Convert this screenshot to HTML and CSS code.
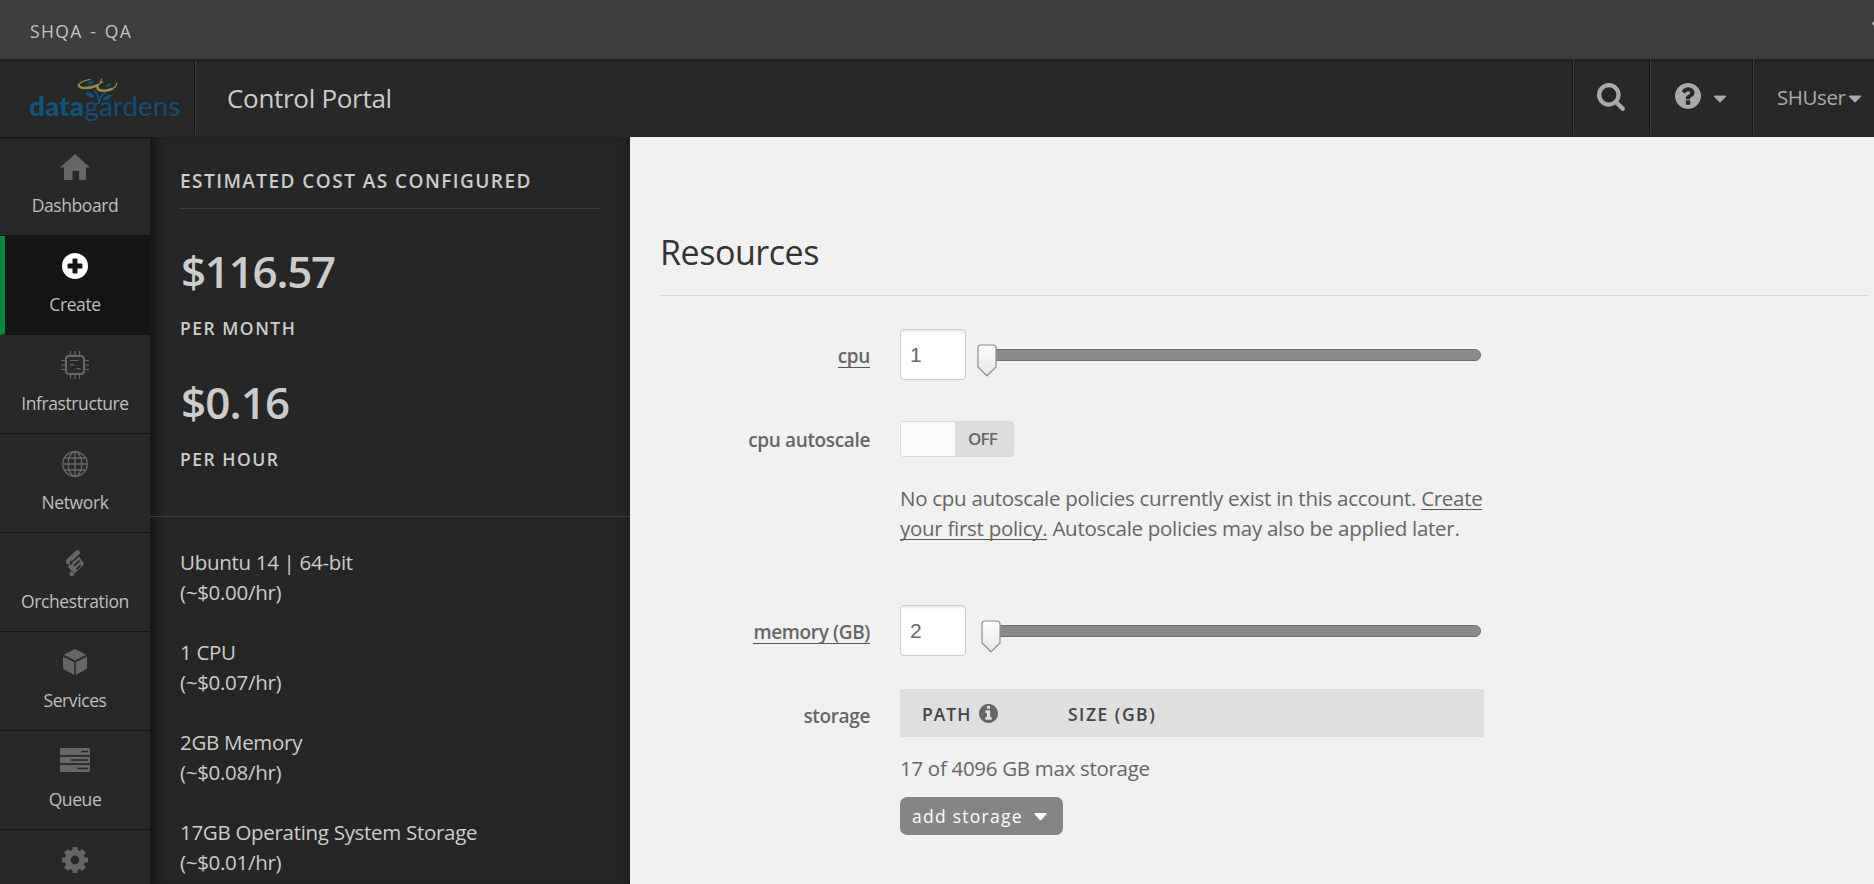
FILE: index.html
```html
<!DOCTYPE html>
<html lang="en">
<head>
<meta charset="utf-8">
<title>Control Portal</title>
<link rel="stylesheet" href="styles.css">
</head>
<body>
<div class="topbar">
  <span class="account">SHQA - QA</span>
  <svg class="edge" width="2" height="5" viewBox="0 0 2 5"><path d="M2 0 0 2.5 2 5z" fill="#bbb"/></svg>
</div>
<header class="header">
  <div class="brand">
    <svg width="151" height="46" viewBox="0 0 151 46">
      <g fill="none" stroke-linecap="round" stroke="#8f8b45">
        <path stroke-width="1.200" d="M60 2.300C54 3.500 49.500 5.500 48.800 8M71.500 2C71.500 4.500 70 6.500 67.500 8.300M73 5C69 6.500 67.500 9 67.500 10.500M86.500 6C87 8.500 85 10.500 82 12"/>
        <path stroke-width="2.600" d="M48.800 8C49 12 59 12 67.500 8.300M67.500 10.500C68 14.500 76 14.500 82 12"/>
      </g>
      <g fill="#0f5582">
        <path d="M57 7q3-4 7-2.500q-2 4-7 2.500zM75 9.500q3-4 7-2.500q-2 4-7 2.500zM55 15.500q8-1 9.500 5q-7 .5-9.500-5zM82 18q-7-.5-9.500 5q7 .5 9.500-5z"/>
      </g>
      <path d="M63.500 13q5 3 5.500 13.500M76 15q-6 3-7 12" fill="none" stroke="#0f5582" stroke-width="1.600"/>
      <text class="logo-bold" x="-1" y="38.500" textLength="55" lengthAdjust="spacingAndGlyphs">data</text>
      <text class="logo-thin" x="54.500" y="38.500" textLength="96" lengthAdjust="spacingAndGlyphs">gardens</text>
    </svg>
  </div>
  <div class="title">Control Portal</div>
  <div class="tool search">
    <svg width="28" height="28" viewBox="64 128 1664 1664"><path fill="#aaa" d="M1216 832q0-185-131.500-316.500t-316.500-131.500-316.500 131.500-131.500 316.500 131.500 316.500 316.500 131.500 316.500-131.500 131.500-316.500zm512 832q0 52-38 90t-90 38q-54 0-90-38l-343-342q-179 124-399 124-143 0-273.500-55.500t-225-150-150-225-55.500-273.500 55.500-273.500 150-225 225-150 273.500-55.500 273.500 55.500 225 150 150 225 55.500 273.500q0 220-124 399l343 343q37 37 37 90z"/></svg>
  </div>
  <div class="tool help">
    <svg width="26" height="26" viewBox="128 128 1536 1536"><path fill="#aaa" d="M1024 1376v-192q0-14-9-23t-23-9h-192q-14 0-23 9t-9 23v192q0 14 9 23t23 9h192q14 0 23-9t9-23zm256-672q0-88-55.500-163t-138.500-116-170-41q-243 0-371 213-15 24 8 42l132 100q7 6 19 6 16 0 25-12 53-68 86-92 34-24 86-24 48 0 85.500 26t37.500 59q0 38-20 61t-68 45q-63 28-115.500 86.500t-52.500 125.500v36q0 14 9 23t23 9h192q14 0 23-9t9-23q0-19 21.500-49.500t54.500-49.500q32-18 49-28.500t46-35 44.500-48 28-60.500 12.500-81zm384 192q0 209-103 385.500t-279.500 279.500-385.500 103-385.500-103-279.500-279.500-103-385.500 103-385.500 279.500-279.500 385.500-103 385.500 103 279.500 279.500 103 385.500z"/></svg>
    <svg class="caret" width="14" height="8" viewBox="0 0 14 8"><path fill="#aaa" d="M1.500.5h11q1.200.3.400 1.300L7.800 7q-.8.700-1.600 0L1.100 1.800Q.3.800 1.500.5z"/></svg>
  </div>
  <div class="tool user">
    <span class="username">SHUser</span>
    <svg class="caret" width="14" height="8" viewBox="0 0 14 8"><path fill="#aaa" d="M1.500.5h11q1.200.3.400 1.300L7.800 7q-.8.700-1.600 0L1.100 1.800Q.3.800 1.500.5z"/></svg>
  </div>
</header>
<div class="body">
  <nav class="sidebar">
    <a class="item">
      <svg class="icon" width="30" height="28" viewBox="0 0 30 28"><path d="M15 1 30 14.500h-4V27h-7v-9h-6.500v9H4V14.500H0z"/></svg>
      <span class="label">Dashboard</span>
    </a>
    <a class="item active">
      <svg class="icon" width="26" height="28" viewBox="0 0 26 28"><path fill-rule="evenodd" d="M13 1a13 13 0 1 1 0 26a13 13 0 0 1 0-26zM11.500 6.500q-1 0-1 1v4h-4q-1 0-1 1v3q0 1 1 1h4v4q0 1 1 1h3q1 0 1-1v-4h4q1 0 1-1v-3q0-1-1-1h-4v-4q0-1-1-1z"/></svg>
      <span class="label">Create</span>
    </a>
    <a class="item">
      <svg class="icon line" width="28" height="28" viewBox="0 0 28 28"><rect x="5" y="5" width="18" height="18" rx="3" stroke-width="2"/><path stroke-width="1.200" d="M9.500 0v4M14 0v4M18.500 0v4M9.500 24v4M14 24v4M18.500 24v4M0 9.500h4M0 14h4M0 18.500h4M24 9.500h4M24 14h4M24 18.500h4M9 9.500h8.500M9 13.800h4.500M15.500 17.800h4"/></svg>
      <span class="label">Infrastructure</span>
    </a>
    <a class="item">
      <svg class="icon line" width="28" height="28" viewBox="0 0 28 28"><g stroke-width="1.400"><circle cx="14" cy="14" r="12.300"/><ellipse cx="14" cy="14" rx="6.800" ry="12.300"/><path d="M14 1.700v24.600M1.700 14h24.600M3.800 8h20.400M3.800 20h20.400"/></g></svg>
      <span class="label">Network</span>
    </a>
    <a class="item">
      <svg class="icon" width="18" height="28" viewBox="0 0 18 28">
        <path d="M9.500 2Q12-.2 13.500 2T13 5.500L6 12 4 11.500Q3 13.500 4.500 15.500H2Q-.5 14-.2 11.200z"/>
        <path fill-rule="evenodd" d="M13.200 7.800 18 14.500 16.500 17 8.500 24.500Q8 21.800 5 21.500L1.500 17.300 6.500 15 5.800 14zM7.500 16.200l1.200 1.500 5.500-5.400-1.200-1.500zM10 19.600l1.200 1.400 4-4-1.200-1.400z"/>
        <circle cx="5.700" cy="25" r="2.400"/>
      </svg>
      <span class="label">Orchestration</span>
    </a>
    <a class="item">
      <svg class="icon" width="24" height="28" viewBox="0 0 24 28"><path d="M12 1 23.300 6.800 12 12.500.700 6.800zM0 8.500 11.200 14.200V27L1 21.300Q0 20.700 0 19.500zM24 8.500 12.800 14.200V27L23 21.300q1-.6 1-1.800z"/></svg>
      <span class="label">Services</span>
    </a>
    <a class="item">
      <svg class="icon" width="30" height="28" viewBox="0 0 30 28"><rect y="1" width="30" height="7" rx="1"/><rect y="9.700" width="30" height="6.600" rx="1"/><rect y="18" width="30" height="7" rx="1"/><path fill="none" stroke="#282828" stroke-width="1.700" d="M21.500 4.500H28M11 13h17M17.500 21.500H28"/></svg>
      <span class="label">Queue</span>
    </a>
    <a class="item">
      <svg class="icon" width="26" height="28" viewBox="-13 -14 26 28"><path fill-rule="evenodd" d="M-2.800-9.700-2.200-13h4.400l.6 3.300 1.900.8L7.400-10.800l3.300 3.300L8.900-4.700l.8 1.900L13-2.200v4.400l-3.300.6-.8 1.900 1.800 2.800-3.300 3.300-2.700-1.900-1.900.8L2.200 13h-4.400l-.6-3.300-1.900-.8-2.700 1.900-3.300-3.300 1.800-2.800-.8-1.900L-13 2.200v-4.400l3.300-.6.800-1.900-1.800-2.800 3.300-3.300 2.700 1.900zM0-4.400a4.400 4.400 0 1 0 0 8.800a4.400 4.400 0 0 0 0-8.800z"/></svg>
    </a>
  </nav>
  <aside class="cost">
    <section class="summary">
      <h2 class="cost-title">ESTIMATED COST AS CONFIGURED</h2>
      <div class="price">$116.57</div>
      <div class="per">PER MONTH</div>
      <div class="price second">$0.16</div>
      <div class="per">PER HOUR</div>
    </section>
    <section class="details">
      <p>Ubuntu 14 | 64-bit<br>(~$0.00/hr)</p>
      <p>1 CPU<br>(~$0.07/hr)</p>
      <p>2GB Memory<br>(~$0.08/hr)</p>
      <p>17GB Operating System Storage<br>(~$0.01/hr)</p>
    </section>
  </aside>
  <main class="main">
    <h1 class="heading">Resources</h1>
    <div class="row cpu">
      <div class="name"><u>cpu</u></div>
      <div class="field">
        <div class="input">1</div>
        <div class="slider"><svg class="handle" width="20" height="33" viewBox="0 0 20 33"><use href="#handle"/></svg></div>
      </div>
    </div>
    <div class="row autoscale">
      <div class="name">cpu autoscale</div>
      <div class="stack">
        <div class="toggle"><span class="knob"></span><span class="off">OFF</span></div>
        <p class="note">No cpu autoscale policies currently exist in this account. <u>Create</u><br><u>your first policy.</u> Autoscale policies may also be applied later.</p>
      </div>
    </div>
    <div class="row memory">
      <div class="name"><u>memory (GB)</u></div>
      <div class="field">
        <div class="input">2</div>
        <div class="slider mem"><svg class="handle" width="20" height="33" viewBox="0 0 20 33"><use href="#handle"/></svg></div>
      </div>
    </div>
    <div class="row storage">
      <div class="name">storage</div>
      <div class="stack">
        <div class="table-head">
          <span class="path">PATH</span>
          <svg class="info" width="19" height="19" viewBox="128 128 1536 1536"><path fill="#666" d="M1152 1376v-160q0-14-9-23t-23-9h-96v-512q0-14-9-23t-23-9h-320q-14 0-23 9t-9 23v160q0 14 9 23t23 9h96v320h-96q-14 0-23 9t-9 23v160q0 14 9 23t23 9h448q14 0 23-9t9-23zm-128-896v-160q0-14-9-23t-23-9h-192q-14 0-23 9t-9 23v160q0 14 9 23t23 9h192q14 0 23-9t9-23zm640 416q0 209-103 385.500t-279.500 279.500-385.500 103-385.500-103-279.500-279.500-103-385.500 103-385.500 279.500-279.500 385.500-103 385.500 103 279.500 279.500 103 385.500z"/></svg>
          <span class="size">SIZE (GB)</span>
        </div>
        <p class="max">17 of 4096 GB max storage</p>
        <div class="button"><span>add storage</span><svg width="13" height="8" viewBox="0 0 13 8"><path fill="#fff" d="M1 0h11q1.200.3.400 1.300L7.300 7q-.8.700-1.600 0L.6 1.300Q-.2.300 1 0z"/></svg></div>
      </div>
    </div>
  </main>
</div>
<svg class="defs" width="0" height="0">
  <defs>
    <linearGradient id="shade" x1="0" y1="0" x2="0" y2="1"><stop offset="0" stop-color="#fdfdfd"/><stop offset="1" stop-color="#e6e6e6"/></linearGradient>
    <g id="handle"><path d="M4 1h12q3 0 3 3v19l-9 8.800L1 23V4q0-3 3-3z" fill="url(#shade)" stroke="#8f8f8f" stroke-width="1.200"/></g>
  </defs>
</svg>
</body>
</html>
```

FILE: styles.css
```css
* { box-sizing: border-box; }
html, body { height: 884px; overflow: hidden; }
body {
  margin: 0;
  display: flex;
  flex-direction: column;
  background: #f1f1f1;
  font-family: "Open Sans", "Noto Sans", sans-serif;
}
h1, h2, p { margin: 0; font-weight: 400; }
svg { display: block; flex: none; }
u { text-decoration: none; border-bottom: 1px solid #555; display: inline-block; line-height: 21px; white-space: pre; }
.defs { position: absolute; }

.topbar {
  flex: none;
  height: 59px;
  background: #3d3d3d;
  padding-left: 30px;
  display: flex;
  justify-content: space-between;
}
.account { font-size: 17.5px; line-height: 63px; color: #c4c4c4; letter-spacing: 1.4px; word-spacing: 1.5px; }
.edge { margin-top: 21px; }

.header {
  flex: none;
  height: 78px;
  background: linear-gradient(#1d1d1d, #282828 5px);
  display: flex;
  align-items: flex-start;
}
.brand { width: 195px; height: 75px; padding: 18px 0 0 30px; border-right: 1px solid #161616; }
.logo-bold { font: 900 27px Lato, sans-serif; fill: #0f5582; }
.logo-thin { font: 400 27px Lato, sans-serif; fill: #104f78; }
.title {
  flex: 1;
  height: 75px;
  padding-left: 31px;
  border-left: 1px solid #3a3a3a;
  font-size: 26px;
  line-height: 78px;
  letter-spacing: -.3px;
  color: #ccc;
}
.tool { height: 75px; border-left: 1px solid #161616; box-shadow: inset 1px 0 #3a3a3a; display: flex; align-items: flex-start; }
.search { width: 77px; padding: 24px 0 0 24px; }
.help { width: 103px; padding: 24px 0 0 25px; }
.help .caret { margin: 12px 0 0 12px; }
.user { width: 122px; padding-left: 24px; }
.username { font-size: 20.5px; line-height: 77px; color: #aaa; width: 71px; letter-spacing: -.4px; }
.user .caret { margin-top: 36px; }

.body { flex: 1; min-height: 0; display: flex; align-items: stretch; }
.sidebar { flex: none; width: 150px; overflow: hidden; background: #282828; box-shadow: inset 0 2px #1b1b1b; }
.item {
  height: 99px;
  border-bottom: 1px solid #141414;
  display: flex;
  flex-direction: column;
  align-items: center;
  padding-top: 16px;
}
.item.active { background: #141414; border-left: 5px solid #008a3f; padding-right: 5px; }
.icon { fill: #666; }
.icon.line { fill: none; stroke: #666; }
.active .icon { fill: #fff; }
.label { margin-top: 10px; font-size: 17.5px; line-height: 29px; color: #bfbfbf; letter-spacing: -.4px; white-space: nowrap; }

.cost {
  flex: none;
  width: 480px;
  overflow: hidden;
  background: #262626;
  box-shadow: inset 12px 0 10px -6px #161616, inset -10px 0 10px -8px #1c1c1c;
  color: #ccc;
}
.summary { height: 380px; padding: 29px 30px 0; border-bottom: 1px solid #3c3c3c; }
.cost-title { font-size: 19px; line-height: 30px; font-weight: 600; letter-spacing: 1.45px; padding-bottom: 12px; border-bottom: 1px solid #3c3c3c; white-space: nowrap; }
.price { margin-top: 32px; padding-left: 1px; font-size: 44px; line-height: 60px; font-weight: 600; letter-spacing: -1.3px; }
.price.second { margin-top: 29px; letter-spacing: -.9px; }
.per { margin-top: 12px; font-size: 17.5px; line-height: 30px; font-weight: 600; letter-spacing: 1.5px; }
.details { padding: 30px 30px 0; font-size: 20.5px; line-height: 30px; letter-spacing: -.3px; }
.details p { margin-bottom: 30px; white-space: nowrap; }

.main { flex: 1; min-width: 0; padding: 90px 5px 0 30px; background: #f1f1f1; color: #666; }
.heading { padding-bottom: 18px; border-bottom: 1px solid #d9d9d9; font-size: 34px; line-height: 50px; letter-spacing: -.45px; color: #333; }
.row { display: flex; gap: 30px; }
.name { width: 210px; text-align: right; font-size: 19px; line-height: 30px; font-weight: 600; letter-spacing: -.35px; white-space: nowrap; padding-top: 12px; }
.cpu { margin-top: 33px; }
.autoscale { margin-top: 41px; }
.autoscale .name { padding-top: 4px; }
.memory { margin-top: 62px; }
.storage { margin-top: 33px; }
.field { display: flex; align-items: flex-start; }
.input {
  width: 66px;
  height: 51px;
  border: 1px solid #ccc;
  border-radius: 4px;
  background: #fff;
  box-shadow: inset 0 2px 2px rgba(0, 0, 0, .08);
  padding-left: 9px;
  font: 21px/49px "Liberation Sans", sans-serif;
}
.slider { position: relative; margin: 20px 0 0 14px; width: 501px; height: 12px; border: 1px solid #6f6f6f; border-radius: 6px; background: #8a8a8a; }
.slider.mem { margin-left: 20px; width: 495px; }
.handle { position: absolute; left: -4px; top: -6px; }
.mem .handle { left: -6px; }
.stack { width: 584px; }
.toggle { width: 114px; height: 36px; border: 1px solid #d9d9d9; border-radius: 4px; background: #ddd; display: flex; }
.knob { width: 54px; background: #fbfbfb; }
.off { padding-left: 13px; font-size: 17px; line-height: 34px; font-weight: 600; letter-spacing: -.8px; }
.note { margin-top: 26px; font-size: 20.5px; line-height: 30px; letter-spacing: -.28px; white-space: nowrap; }
.table-head { height: 48px; background: #dfdfdf; padding-left: 22px; display: flex; color: #444; font-size: 17.5px; line-height: 51px; font-weight: 600; letter-spacing: 1px; }
.path { width: 57px; }
.info { margin-top: 15px; }
.size { margin-left: 70px; letter-spacing: 1.5px; }
.max { margin-top: 16px; font-size: 20.5px; line-height: 30px; letter-spacing: -.3px; }
.button { margin-top: 14px; width: 163px; height: 38px; border-radius: 7px; background: #858585; color: #fff; padding-left: 12px; display: flex; font-size: 17.5px; line-height: 38px; letter-spacing: 1.25px; }
.button span { width: 122px; }
.button svg { margin-top: 16px; }
```
